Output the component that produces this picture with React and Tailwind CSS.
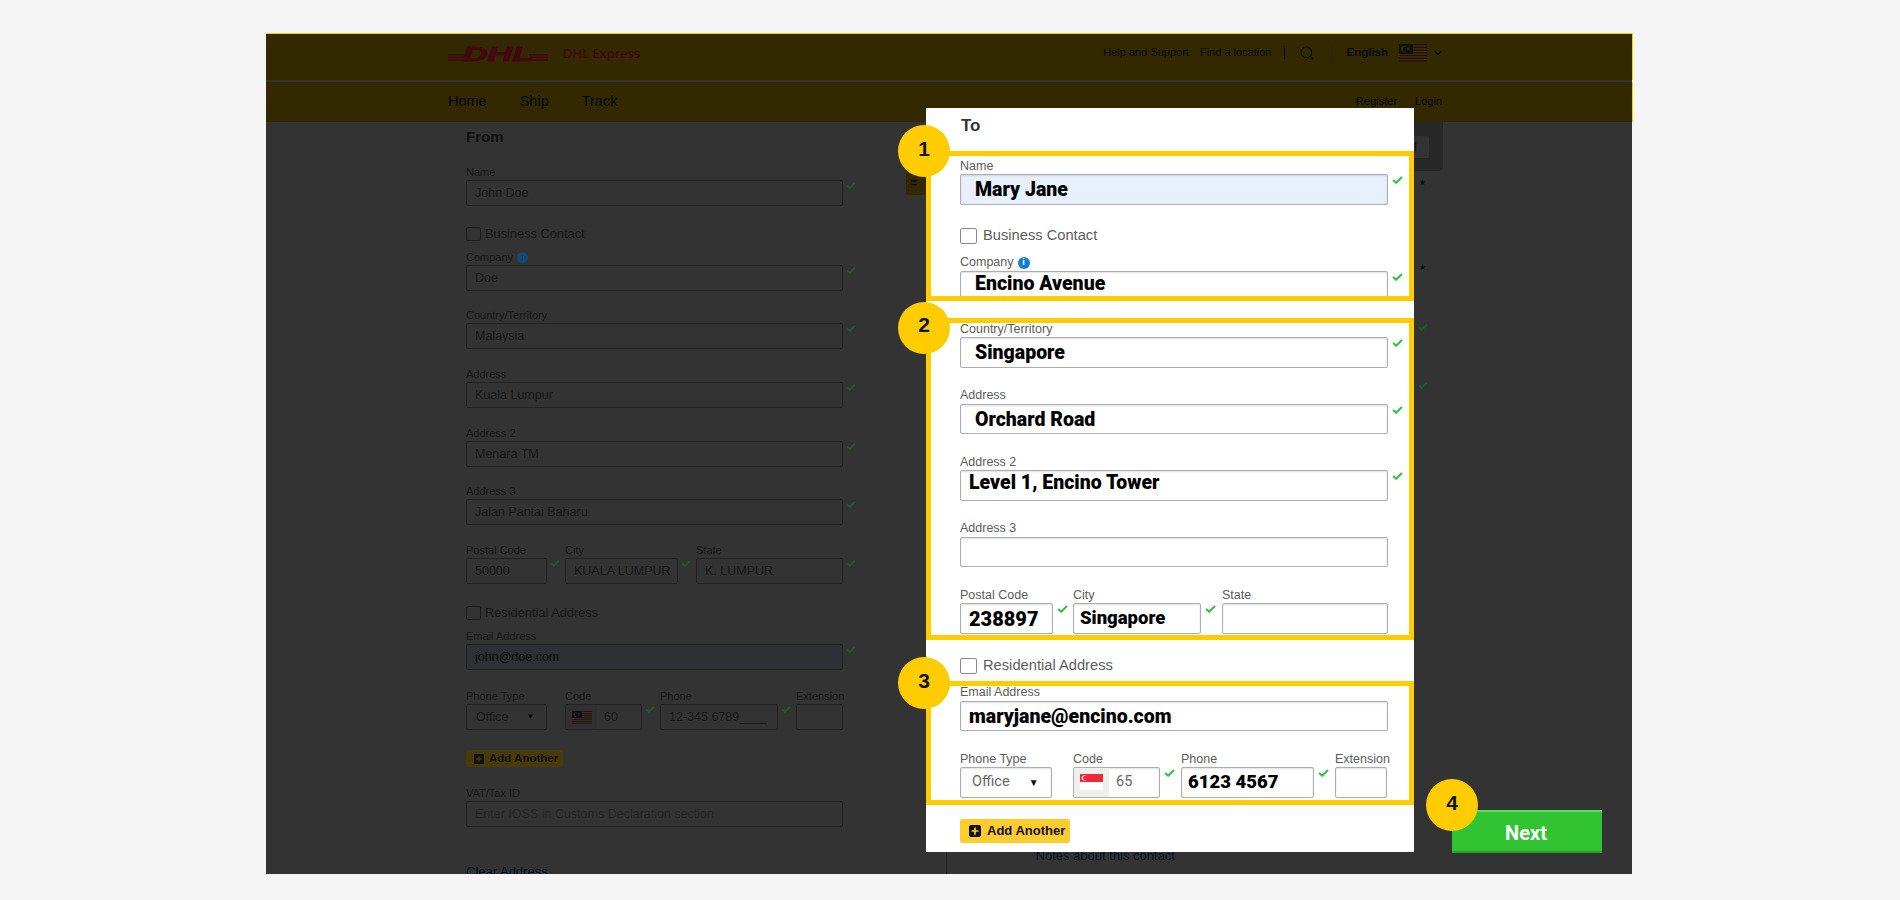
import { ChevronDown, Plus, Search } from "lucide-react";

const sans = "font-['Liberation_Sans',Arial,sans-serif]";
const heavy = "font-['Roboto',sans-serif] font-black text-black";

function Check({ dark }) {
  return (
    <svg
      viewBox="0 0 12 9"
      className={dark ? "relative z-20 h-[7px] w-[10px]" : "h-[8px] w-[11px]"}
      fill="none"
      stroke={dark ? "#1d5a26" : "#35c043"}
      strokeWidth="2.4"
    >
      <path d="M1 4.5 4.5 7.5 11 1" />
    </svg>
  );
}

function InfoDot({ dark }) {
  return (
    <span
      className={`relative z-20 inline-flex items-center justify-center rounded-full font-bold ${
        dark ? "h-[11px] w-[11px] bg-[#0f4a78] text-[8px] text-[#333]" : "h-[12px] w-[12px] bg-[#1080d0] text-[9px] text-white"
      }`}
    >
      i
    </span>
  );
}

function MalaysiaFlag({ className }) {
  return (
    <svg viewBox="0 0 28 20" preserveAspectRatio="none" className={className}>
      <rect width="28" height="20" fill="#fff" />
      {[0, 3, 6, 9, 12, 15, 18].map((y) => (
        <rect key={y} y={y} width="28" height="1.5" fill="#cc0001" />
      ))}
      <rect width="14" height="11" fill="#010066" />
      <circle cx="5.5" cy="5.5" r="3.4" fill="#fc0" />
      <circle cx="6.6" cy="5.5" r="2.8" fill="#010066" />
      <circle cx="9.5" cy="5.5" r="1.5" fill="#fc0" />
    </svg>
  );
}

function SingaporeFlag() {
  return (
    <svg viewBox="0 0 23 16" className="h-[16px] w-[23px]">
      <rect width="23" height="8" fill="#ed2939" />
      <rect y="8" width="23" height="8" fill="#fff" />
      <circle cx="4.5" cy="4" r="2.8" fill="#fff" />
      <circle cx="5.6" cy="4" r="2.6" fill="#ed2939" />
    </svg>
  );
}

// dimmed form that sits under the overlay
function BackField({ label, value, w = "w-[377px]", check = true, info, bg = "bg-white", text = "text-[#777]", pl = "pl-2", children }) {
  return (
    <div className={w}>
      <div className="flex h-[15px] items-center gap-1 whitespace-nowrap text-[11px] leading-[15px] text-[#777]">
        {label}
        {info && <InfoDot dark />}
      </div>
      <div className="relative">
        <div className={`flex h-[26px] items-center overflow-hidden whitespace-nowrap rounded-[2px] border border-[#aaa] text-[12.5px] ${pl} ${bg} ${text}`}>
          {value}
          {children}
        </div>
        {check && (
          <div className="absolute left-full top-[2px] ml-[3px]">
            <Check dark />
          </div>
        )}
      </div>
    </div>
  );
}

function BackCheckbox({ label }) {
  return (
    <div className="flex h-[14px] items-center gap-[4px] text-[12.8px] text-[#777]">
      <span className="h-[14px] w-[15px] rounded-[2px] border border-[#888]" />
      {label}
    </div>
  );
}

function Field({ label, value, w = "w-[428px]", size = "text-[19.5px]", pl = "pl-[14px]", shift = "pt-[1px]", check = true, info, bg = "bg-white", children }) {
  return (
    <div className={w}>
      <div className="flex h-[16px] items-center gap-[4px] whitespace-nowrap text-[12.5px] text-[#5c5c5c]">
        {label}
        {info && <InfoDot />}
      </div>
      <div className="relative">
        <div
          className={`flex h-[30.5px] items-center overflow-hidden whitespace-nowrap rounded-[2px] border-[1.5px] border-[#adadad] shadow-[inset_0_1px_2px_rgba(0,0,0,0.12)] ${pl} ${bg} ${heavy} ${size}`}
        >
          <span className={shift}>{value}</span>
          {children}
        </div>
        {check && (
          <div className="absolute left-full top-[2px] ml-[4px]">
            <Check />
          </div>
        )}
      </div>
    </div>
  );
}

function Checkbox({ label }) {
  return (
    <div className="flex h-[16px] items-center gap-[6px] text-[14.7px] text-[#5c5c5c]">
      <span className="h-[16px] w-[17px] rounded-[2px] border-[1.5px] border-[#8a8a8a] bg-white" />
      {label}
    </div>
  );
}

function Badge({ n, className }) {
  return (
    <div
      className={`absolute z-40 flex h-[52px] w-[52px] items-center justify-center rounded-full bg-[#ffcc00] pb-[5px] text-[21px] font-bold text-[#111] ${className}`}
    >
      {n}
    </div>
  );
}

function Outline({ className }) {
  return <div className={`pointer-events-none absolute z-40 border-[5px] border-[#ffcc00] ${className}`} />;
}

function BackForm() {
  return (
    <div className={`flex h-[752px] ${sans}`}>
      <div className="relative flex w-[498px] flex-col pl-[18px] pt-[6px]">
        <div className="h-[18px] text-[15px] font-bold leading-[18px] text-[#555]">From</div>
        <div className="mt-[19px]">
          <BackField label="Name" value="John Doe" />
        </div>
        <div className="mt-[21px]">
          <BackCheckbox label="Business Contact" />
        </div>
        <div className="mt-[9px]">
          <BackField label="Company" value="Doe" info />
        </div>
        <div className="mt-[17px]">
          <BackField label="Country/Territory" value="Malaysia" />
        </div>
        <div className="mt-[18px]">
          <BackField label="Address" value="Kuala Lumpur" />
        </div>
        <div className="mt-[18px]">
          <BackField label="Address 2" value="Menara TM" />
        </div>
        <div className="mt-[17px]">
          <BackField label="Address 3" value="Jalan Pantai Baharu" />
        </div>
        <div className="mt-[18px] flex gap-[18px]">
          <BackField label="Postal Code" value="50000" w="w-[81px]" />
          <BackField label="City" value="KUALA LUMPUR" w="w-[113px]" />
          <BackField label="State" value="K. LUMPUR" w="w-[147px]" />
        </div>
        <div className="mt-[22px]">
          <BackCheckbox label="Residential Address" />
        </div>
        <div className="mt-[9px]">
          <BackField label="Email Address" value="john@doe.com" bg="bg-[#e8f0fe]" text="text-[#222]" />
        </div>
        <div className="mt-[19px] flex gap-[18px]">
          <BackField label="Phone Type" value="Office" w="w-[81px]" check={false} pl="pl-[9px]">
            <span className="ml-[18px] text-[8px] text-[#222]">▼</span>
          </BackField>
          <BackField label="Code" value="" w="w-[77px]" pl="pl-0">
            <span className="flex h-full w-[31px] items-center justify-center bg-[#eee]">
              <MalaysiaFlag className="h-[13px] w-[20px] opacity-70" />
            </span>
            <span className="ml-[7px]">60</span>
          </BackField>
          <BackField label="Phone" value="12-345 6789____" w="w-[118px]" />
          <BackField label="Extension" value="" w="w-[47px]" check={false} />
        </div>
        <div className="relative z-20 mt-[20px] flex h-[21px] w-[97px] items-center gap-[5px] rounded-[2px] bg-[#4a3a0a] pl-[8px] text-[11.5px] font-bold text-[#111]">
          <span className="flex h-[10px] w-[10px] items-center justify-center rounded-[1px] bg-[#111]">
            <Plus size={8} strokeWidth={4} color="#4a3a0a" />
          </span>
          Add Another
        </div>
        <div className="mt-[19px]">
          <BackField label="VAT/Tax ID" value="Enter IOSS in Customs Declaration section" check={false} text="text-[#bbb]" />
        </div>
        <div className="mt-[37px] text-[13px] leading-[16px] text-[#0a5fa8]">Clear Address</div>
        <div className="absolute left-[458px] top-[48px] flex h-[25px] w-[40px] items-center rounded-l-[2px] bg-[#ffcc00] pl-[4px] text-[12px] font-bold text-black">
          =
        </div>
      </div>
      <div className="flex w-[497px] flex-col items-end border-l border-[#bbb]">
        <div className="flex h-[49px] w-full items-center justify-end rounded-br-[4px] bg-[#c2c2c2] pr-[14px]">
          <div className="flex h-[22px] items-center rounded-[2px] bg-white px-3 text-[13px] text-[#555]">Cancel</div>
        </div>
        <div className="mr-[17px] mt-[7px] text-[8px] leading-[10px] text-[#444]">★</div>
        <div className="mr-[17px] mt-[75px] text-[8px] leading-[10px] text-[#444]">★</div>
        <div className="mr-[15px] mt-[51px]">
          <Check dark />
        </div>
        <div className="mr-[15px] mt-[51px]">
          <Check dark />
        </div>
        <div className="mr-[268px] mt-[457px] whitespace-nowrap text-[13px] text-[#0a5fa8]">Notes about this contact</div>
      </div>
    </div>
  );
}

function Modal() {
  return (
    <div className={`absolute left-[660px] top-[75px] z-30 flex h-[744px] w-[488px] flex-col bg-white pl-[34px] pt-[9px] ${sans}`}>
      <div className="ml-[1px] h-[18px] text-[17px] font-bold leading-[18px] text-[#333]">To</div>
      <div className="mt-[23px]">
        <Field label="Name" value="Mary Jane" bg="bg-[#e8f0fe]" />
      </div>
      <div className="mt-[23px]">
        <Checkbox label="Business Contact" />
      </div>
      <div className="mt-[11px]">
        <Field label="Company" value="Encino Avenue" info shift="-mt-[4px]" />
      </div>
      <div className="mt-[20px]">
        <Field label="Country/Territory" value="Singapore" />
      </div>
      <div className="mt-[20px]">
        <Field label="Address" value="Orchard Road" />
      </div>
      <div className="mt-[20px]">
        <Field label="Address 2" value="Level 1, Encino Tower" pl="pl-[8px]" shift="-mt-[5px]" />
      </div>
      <div className="mt-[20px]">
        <Field label="Address 3" value="" check={false} />
      </div>
      <div className="mt-[20px] flex">
        <Field label="Postal Code" value="238897" w="w-[93px]" pl="pl-[8px]" size="text-[20px]" />
        <div className="ml-[20px]">
          <Field label="City" value="Singapore" w="w-[128px]" pl="pl-[6px]" size="text-[18.5px]" />
        </div>
        <div className="ml-[21px]">
          <Field label="State" value="" w="w-[166px]" check={false} />
        </div>
      </div>
      <div className="mt-[24px]">
        <Checkbox label="Residential Address" />
      </div>
      <div className="mt-[11px]">
        <Field label="Email Address" value="maryjane@encino.com" pl="pl-[8px]" size="text-[19.5px]" check={false} />
      </div>
      <div className="mt-[20px] flex">
        <Field label="Phone Type" value="" w="w-[92px]" check={false} pl="pl-0">
          <span className="ml-[11px] text-[14.5px] font-normal text-[#666]">Office</span>
          <span className="ml-[19px] text-[10px] font-normal text-[#111]">▼</span>
        </Field>
        <div className="ml-[21px]">
          <Field label="Code" value="" w="w-[87px]" pl="pl-0">
            <span className="flex h-full w-[35px] items-center justify-center bg-[#efefef]">
              <SingaporeFlag />
            </span>
            <span className="ml-[7px] text-[14.5px] font-normal text-[#666]">65</span>
          </Field>
        </div>
        <div className="ml-[21px]">
          <Field label="Phone" value="6123 4567" w="w-[133px]" pl="pl-[6px]" size="text-[18.5px]" />
        </div>
        <div className="ml-[21px]">
          <Field label="Extension" value="" w="w-[52px]" check={false} />
        </div>
      </div>
      <div className="mt-[21px] flex h-[24px] w-[110px] items-center gap-[6px] rounded-[2px] bg-[#ffcc2e] pl-[9px] text-[13px] font-bold text-[#111]">
        <span className="flex h-[12px] w-[12px] items-center justify-center rounded-[2px] bg-[#111]">
          <Plus size={10} strokeWidth={4} color="#ffcc2e" />
        </span>
        Add Another
      </div>
    </div>
  );
}

export default function App() {
  return (
    <div className="h-[900px] overflow-hidden bg-[#f5f5f5] pl-[266px] pt-[33px]">
      <div className={`relative h-[841px] w-[1366px] bg-white ${sans}`}>
        <header className="w-[1367px] bg-[#ffcc00]">
          <div className="flex h-[47px] items-center justify-between pl-[182px] pr-[189px]">
            <div className="relative z-20 mb-[5px] flex items-center gap-[15px]">
              <svg viewBox="0 0 100 16" className="h-[16px] w-[100px] overflow-visible">
                <rect x="0" y="8" width="19" height="1.6" fill="#430811" />
                <rect x="0" y="10.6" width="17" height="1.6" fill="#430811" />
                <rect x="0" y="13.2" width="15" height="1.6" fill="#430811" />
                <rect x="81" y="8" width="19" height="1.6" fill="#430811" />
                <rect x="82" y="10.6" width="18" height="1.6" fill="#430811" />
                <rect x="83" y="13.2" width="17" height="1.6" fill="#430811" />
                <text x="50" y="15" textAnchor="middle" fontSize="20" fontWeight="900" fontStyle="italic" fill="#430811" stroke="#430811" strokeWidth="0.8" textLength="70" lengthAdjust="spacingAndGlyphs">
                  DHL
                </text>
              </svg>
              <span className="font-['Noto_Sans',sans-serif] text-[13px] font-medium text-[#430811]">DHL Express</span>
            </div>
            <div className="mb-[8px] flex items-center text-[11px] text-[#333]">
              <span>Help and Support</span>
              <span className="ml-[11px]">Find a location</span>
              <span className="ml-[13px] h-[13px] w-px bg-[#222]" />
              <Search size={16} strokeWidth={1.6} className="ml-[14px]" />
              <span className="ml-[17px] h-[18px] w-px bg-[#bbb]" />
              <span className="ml-[13px] text-[11.5px] font-bold">English</span>
              <MalaysiaFlag className="ml-[11px] h-[18px] w-[28px] opacity-60" />
              <ChevronDown size={12} strokeWidth={2.5} className="ml-[5px]" />
            </div>
          </div>
          <div className="h-[2px] bg-white" />
          <div className="flex h-[40px] items-center justify-between pl-[182px] pr-[191px] text-[#222]">
            <div className="flex gap-[33px] text-[14.5px]">
              <span>Home</span>
              <span>Ship</span>
              <span>Track</span>
            </div>
            <div className="flex gap-[18px] pb-[2px] text-[11px]">
              <span>Register</span>
              <span>Login</span>
            </div>
          </div>
        </header>
        <div className="overflow-hidden pl-[182px]">
          <BackForm />
        </div>

        <div className="absolute bottom-0 left-0 right-0 top-[1px] z-10 bg-black/80" />

        <Modal />
        <Outline className="left-[660px] top-[118px] h-[150px] w-[488px]" />
        <Outline className="left-[660px] top-[284.5px] h-[322.5px] w-[488px]" />
        <Outline className="left-[660px] top-[648.3px] h-[123.4px] w-[488px]" />
        <Badge n="1" className="left-[632px] top-[92px]" />
        <Badge n="2" className="left-[632px] top-[268.7px]" />
        <Badge n="3" className="left-[632px] top-[624px]" />

        <div className="absolute left-[1186px] top-[777px] z-30 flex h-[43px] w-[150px] items-center justify-center border-t-2 border-[#5fdc5f] bg-[#32c332] pr-[2px] text-[20px] font-bold text-white shadow-[inset_0_-2px_0_#26a026]">
          <span className="font-['Roboto',sans-serif]">Next</span>
        </div>
        <Badge n="4" className="left-[1160px] top-[746px]" />
      </div>
    </div>
  );
}
